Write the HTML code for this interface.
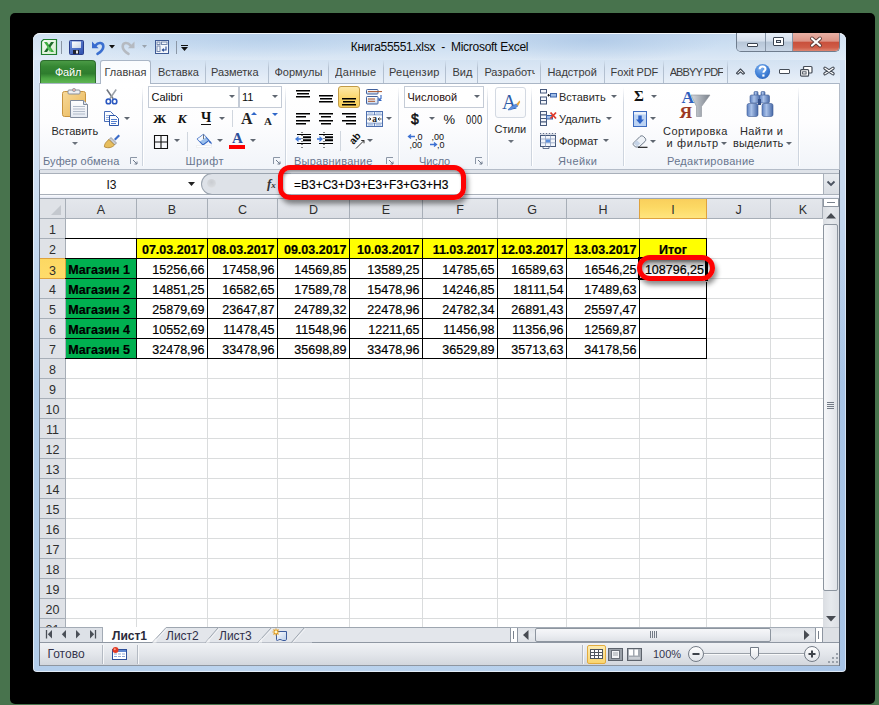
<!DOCTYPE html>
<html><head><meta charset="utf-8">
<style>
*{margin:0;padding:0;box-sizing:border-box}
html,body{width:879px;height:705px;overflow:hidden;background:#48734d;font-family:"Liberation Sans",sans-serif;font-size:11px;color:#222}
.a{position:absolute}
svg{position:absolute;overflow:visible}
.nw{white-space:nowrap}

#shadow{left:10px;top:13px;width:865px;height:691px;background:#000;border-radius:5px}
#win{left:33px;top:33px;width:813px;height:639px;border-radius:7px 7px 4px 4px;
 background:linear-gradient(180deg,rgba(230,238,248,.75) 0%,rgba(230,238,248,.5) 25%,rgba(230,238,248,0) 55%),linear-gradient(90deg,#b2cdeb 0%,#bcd4ee 25%,#b8d1ec 50%,#b6cfeb 75%,#a7c4e7 100%);box-shadow:inset 1px 0 0 rgba(255,255,255,.6),inset -1px 0 0 rgba(255,255,255,.5),inset 0 -1px 0 rgba(255,255,255,.6)}
#wintop{left:33px;top:33px;width:813px;height:27px;border-radius:7px 7px 0 0;
 background:radial-gradient(ellipse 130px 22px at 560px 6px,rgba(160,190,225,.55),rgba(160,190,225,0)),
 radial-gradient(ellipse 160px 20px at 230px 4px,rgba(165,195,228,.45),rgba(165,195,228,0)),
 linear-gradient(90deg,rgba(235,242,250,.35) 0%,rgba(235,242,250,0) 15%,rgba(235,242,250,0) 85%,rgba(235,242,250,.4) 100%),
 linear-gradient(180deg,#c4d8ee 0%,#cddfF2 45%,#dce8f5 100%);border-top:1px solid #f4f8fc}


.ttl{left:0;top:39.5px;width:879px;text-align:center;font-size:12px;color:#0a0a0a;letter-spacing:-0.28px}
.wb{top:33px;height:19px;border:1px solid #7a8796;border-top:none}


#tabrow{left:39px;top:60px;width:801px;height:23px;background:linear-gradient(180deg,#d3e2f2 0%,#dde8f5 50%,#e9f0f8 100%)}
.tab{top:66px;font-size:11px;color:#3b3b3b}
.ts{top:60px;width:1px;height:23px;background:linear-gradient(180deg,rgba(160,178,200,0) 0%,#b3c0d0 35%,#b3c0d0 100%)}


#rib{left:39px;top:83px;width:801px;height:87px;border:1px solid #b4bcc8;border-top-color:#aab6c6;
 background:linear-gradient(180deg,#ffffff 0%,#fdfdfe 45%,#f1f4f9 100%)}
.gs{top:87px;width:1px;height:79px;background:linear-gradient(180deg,rgba(205,212,222,0) 0%,#d3d9e2 20%,#cdd4de 100%);box-shadow:1px 0 0 #fff}
.gl{top:155px;font-size:11px;color:#68758e;letter-spacing:.14px}
.rt{font-size:11px;color:#2a2a2a}
.dd{width:0;height:0;border-left:3px solid transparent;border-right:3px solid transparent;border-top:3px solid #5f6670;margin-left:-.5px}
.cb{background:#fff;border:1px solid #c4cbd6}



#fb{left:39px;top:170px;width:801px;height:29px;background:#dfe3e9}


#gridbg{left:40px;top:199px;width:783px;height:428px;background:#fff;overflow:hidden}
.ch{top:199px;height:20px;background:linear-gradient(180deg,#e4e7ec,#dcdfe5);border-right:1px solid #a7aeb7;border-bottom:1px solid #a7aeb7}
.cht{top:202.5px;font-size:12.5px;color:#2e2e2e;text-align:center}
.rh{left:40px;width:26px;background:#dfe2e7;border-right:1px solid #a7aeb7;border-bottom:1px solid #a7aeb7;text-align:center;font-size:12.5px;color:#2e2e2e;line-height:20px;padding-top:1px}
.gv{top:219px;width:1px;height:408px;background:#dadcdd}
.gh{left:66px;width:757px;height:1px;background:#dadcdd}
.c{font-size:12.5px;color:#000;white-space:nowrap;line-height:19px;height:19px;padding-top:1px;-webkit-text-stroke:.2px #000}
.cb2{font-weight:bold}


.sb{background:linear-gradient(180deg,#f0f2f5 0%,#e3e6eb 50%,#d3d7dd 100%)}
.ttab{top:629px;font-size:12px;color:#30304a}


.rb{border:5px solid #fe0202;box-shadow:2px 4px 5px rgba(0,0,0,.45),inset 1px 2px 3px rgba(0,0,0,.35)}

</style></head><body>

<div id="shadow" class="a"></div>
<div id="win" class="a"></div>
<div id="wintop" class="a"></div>


<svg style="left:40px;top:38px" width="18" height="18" viewBox="0 0 18 18">
 <defs><linearGradient id="xg" x1="0" y1="0" x2="1" y2="1"><stop offset="0" stop-color="#f4fbf2"/><stop offset="1" stop-color="#d5ecd0"/></linearGradient></defs>
 <path d="M3.5 1.5 H16.5 V16.5 H1.5 V3.5 Z" fill="url(#xg)" stroke="#1f7f2e" stroke-width="1.2"/>
 <path d="M4 4 L7 4 L14 14 L11 14 Z" fill="#3fae3f"/>
 <path d="M11 4 L14 4 L7 14 L4 14 Z" fill="#1d6b2a"/>
 <path d="M8.2 7.5 L11.5 12 L10 14 L6.8 9.6 Z" fill="#56c45a"/>
</svg>
<div class="a" style="left:61px;top:41px;width:1px;height:13px;background:#8b97a6"></div>
<svg style="left:69px;top:40px" width="15" height="15" viewBox="0 0 15 15">
 <defs><linearGradient id="sg" x1="0" y1="0" x2="1" y2="1"><stop offset="0" stop-color="#7392dc"/><stop offset="1" stop-color="#2d4fae"/></linearGradient>
 <linearGradient id="sl" x1="0" y1="0" x2="1" y2="1"><stop offset="0" stop-color="#ffffff"/><stop offset="1" stop-color="#c9d3e6"/></linearGradient></defs>
 <rect x="0.5" y="0.5" width="14" height="14" rx="1" fill="url(#sg)" stroke="#2a3f8c" stroke-width="1"/>
 <rect x="3" y="1.5" width="9" height="6.5" fill="url(#sl)"/>
 <rect x="4" y="10" width="6" height="4" fill="#1e2130"/>
 <rect x="7" y="10.5" width="2" height="3" fill="#e8e8e8"/>
</svg>
<svg style="left:91px;top:40px" width="15" height="15" viewBox="0 0 15 15">
 <path d="M4.5 5.5 C7 2 12.5 1.8 12.3 6.8 C12.1 10 9.5 12 6.5 13.8" fill="none" stroke="#3b6fd0" stroke-width="2.6" stroke-linecap="round"/>
 <path d="M1 1.5 L1 8.2 L7.6 8.2 Z" fill="#3a6bcf"/>
</svg>
<svg style="left:109px;top:45px" width="7" height="4"><path d="M0 0 H6 L3 3.5 Z" fill="#111"/></svg>
<svg style="left:120px;top:40px" width="16" height="15" viewBox="0 0 16 15">
 <path d="M10.5 5.5 C8 2 2.5 1.8 2.7 6.8 C2.9 10 5.5 12 8.5 13.8" fill="none" stroke="#b5bac1" stroke-width="2.6" stroke-linecap="round"/>
 <path d="M14.5 1.5 L14.5 8.2 L7.9 8.2 Z" fill="#b5bac1"/>
</svg>
<svg style="left:142px;top:45px" width="7" height="4"><path d="M0 0 H5 L2.5 3 Z" fill="#9aa3ad"/></svg>
<svg style="left:155px;top:40px" width="14" height="14" viewBox="0 0 14 14">
 <rect x="0.5" y="0.5" width="13" height="13" fill="#f4f7fc" stroke="#3e5a94"/>
 <rect x="2" y="2" width="3" height="2.5" fill="none" stroke="#6b7fa8" stroke-width=".9"/>
 <rect x="6.5" y="2" width="5.5" height="2.5" fill="none" stroke="#6b7fa8" stroke-width=".9"/>
 <rect x="2" y="6" width="3" height="5.5" fill="none" stroke="#6b7fa8" stroke-width=".9"/>
 <path d="M11 6.5 V10 H7.5 M8.8 8.6 L7.3 10 L8.8 11.4" fill="none" stroke="#2a4c95" stroke-width="1.1"/>
</svg>
<div class="a" style="left:176px;top:41px;width:1px;height:13px;background:#8b97a6"></div>
<div class="a" style="left:181px;top:45px;width:7px;height:1px;background:#111"></div>
<svg style="left:181px;top:47px" width="7" height="4"><path d="M0 0 H7 L3.5 4 Z" fill="#111"/></svg>
<div class="a ttl nw">Книга55551.xlsx&nbsp; - &nbsp;Microsoft Excel</div>
<div class="a" style="left:736px;top:33px;width:104px;height:19px;border-radius:0 0 5px 5px;border:1px solid #6f7d8e;border-top:none;overflow:hidden">
 <div class="a" style="left:0;top:0;width:29px;height:18px;background:linear-gradient(180deg,#e7eef7 0%,#d5dfec 45%,#b7c6d8 50%,#c9d6e6 100%);border-right:1px solid #8896a8"></div>
 <div class="a" style="left:29px;top:0;width:27px;height:18px;background:linear-gradient(180deg,#e7eef7 0%,#d5dfec 45%,#b7c6d8 50%,#c9d6e6 100%);border-right:1px solid #8896a8"></div>
 <div class="a" style="left:56px;top:0;width:47px;height:18px;background:linear-gradient(180deg,#e9b1a5 0%,#dc9486 45%,#c9503c 52%,#cf5c47 80%,#dc8571 100%)"></div>
</div>
<div class="a" style="left:747px;top:43px;width:11px;height:4px;background:#fff;border:1px solid #3b4452;border-radius:1px"></div>
<div class="a" style="left:773px;top:37px;width:11px;height:9px;background:#fff;border:1px solid #3b4452;border-radius:1px"><div class="a" style="left:2px;top:2px;width:5px;height:3px;border:1px solid #3b4452;background:#dfe6ee"></div></div>
<svg style="left:810px;top:37px" width="12" height="10" viewBox="0 0 12 10"><path d="M2 1.5 L10 8.5 M10 1.5 L2 8.5" stroke="#5a3a36" stroke-width="3.8" stroke-linecap="round"/><path d="M2 1.5 L10 8.5 M10 1.5 L2 8.5" stroke="#fff" stroke-width="2.2" stroke-linecap="round"/></svg>

<div id="tabrow" class="a"></div>
<div class="a ts" style="left:205px"></div><div class="a ts" style="left:268px"></div><div class="a ts" style="left:328px"></div><div class="a ts" style="left:383px"></div><div class="a ts" style="left:445px"></div><div class="a ts" style="left:477px"></div><div class="a ts" style="left:540px"></div><div class="a ts" style="left:604px"></div><div class="a ts" style="left:663px"></div><div class="a ts" style="left:727px"></div><div class="a tab nw" style="left:158px;width:48px;overflow:hidden;">Вставка</div><div class="a tab nw" style="left:211px;width:58px;overflow:hidden;">Разметка</div><div class="a tab nw" style="left:274.5px;width:54.5px;overflow:hidden;">Формулы</div><div class="a tab nw" style="left:335px;width:49px;overflow:hidden;letter-spacing:.28px;">Данные</div><div class="a tab nw" style="left:389px;width:57px;overflow:hidden;letter-spacing:.25px;">Рецензир</div><div class="a tab nw" style="left:452.5px;width:25.5px;overflow:hidden;">Вид</div><div class="a tab nw" style="left:484.4px;width:50.5px;overflow:hidden;">Разработч</div><div class="a tab nw" style="left:547.4px;width:57.60000000000002px;overflow:hidden;">Надстрой</div><div class="a tab nw" style="left:610.6px;width:53.39999999999998px;overflow:hidden;letter-spacing:-.15px;">Foxit PDF</div><div class="a tab nw" style="left:669.7px;width:53px;overflow:hidden;letter-spacing:-.9px;">ABBYY PDF</div>
<div class="a" style="left:40px;top:60px;width:56px;height:24px;border-radius:4px 4px 0 0;border:1px solid #2d6d2d;border-bottom:none;
 background:linear-gradient(180deg,#4a9a45 0%,#358733 25%,#2e7d2e 55%,#4ba543 75%,#63b957 100%)"></div>
<div class="a nw" style="left:55px;top:66px;font-size:11px;color:#fff;letter-spacing:-.25px">Файл</div>
<div class="a" style="left:100px;top:60px;width:51px;height:24px;border-radius:3px 3px 0 0;border:1px solid #aab6c6;border-bottom:none;background:linear-gradient(180deg,#fafcfe,#ffffff)"></div>
<div class="a tab nw" style="left:104.5px">Главная</div>

<svg style="left:735px;top:67px" width="11" height="8" viewBox="0 0 11 8"><path d="M1.5 6.2 L5.5 2 L9.5 6.2 L8 7.2 L5.5 4.8 L3 7.2 Z" fill="#fff" stroke="#3d4450" stroke-width="1.1" stroke-linejoin="round"/></svg>
<svg style="left:754px;top:63px" width="17" height="17" viewBox="0 0 17 17">
 <defs><radialGradient id="hq" cx=".4" cy=".3" r=".8"><stop offset="0" stop-color="#7db0ee"/><stop offset=".6" stop-color="#3f7fd6"/><stop offset="1" stop-color="#2d62b8"/></radialGradient></defs>
 <circle cx="8.5" cy="8.5" r="7.6" fill="url(#hq)"/>
 <path d="M5.6 6.3 C5.6 4.4 7 3.4 8.6 3.4 C10.3 3.4 11.5 4.5 11.5 5.9 C11.5 7.6 9.4 8 9.4 9.8" fill="none" stroke="#fff" stroke-width="2"/>
 <rect x="8.3" y="11.4" width="2.2" height="2.2" fill="#fff"/>
</svg>
<div class="a" style="left:779px;top:69px;width:11px;height:5px;border:1px solid #454c57;background:#fff;border-radius:1px"></div>
<svg style="left:800px;top:66px" width="13" height="11" viewBox="0 0 13 11"><rect x="3.5" y="0.5" width="8.5" height="6.5" rx="1" fill="#fff" stroke="#454c57" stroke-width="1.2"/><rect x="0.6" y="3.6" width="8" height="6.6" rx="1" fill="#fff" stroke="#454c57" stroke-width="1.2"/><rect x="2.6" y="5.8" width="3.5" height="2.2" fill="none" stroke="#454c57" stroke-width=".9"/></svg>
<svg style="left:823px;top:67px" width="12" height="8" viewBox="0 0 12 8"><path d="M2 1.3 L10 6.7 M10 1.3 L2 6.7" stroke="#454c57" stroke-width="3.4" stroke-linecap="round"/><path d="M2 1.3 L10 6.7 M10 1.3 L2 6.7" stroke="#fff" stroke-width="1.3" stroke-linecap="round"/></svg>

<div id="rib" class="a"></div><div class="a" style="left:101px;top:83px;width:49px;height:2px;background:#fff"></div><div class="a gs" style="left:142px"></div><div class="a gs" style="left:285px"></div><div class="a gs" style="left:398px"></div><div class="a gs" style="left:487px"></div><div class="a gs" style="left:531px"></div><div class="a gs" style="left:623px"></div><div class="a gs" style="left:798px"></div><div class="a gl nw" style="left:43px">Буфер обмена</div><svg style="left:130px;top:157px" width="8" height="8" viewBox="0 0 8 8"><path d="M0.5 7 V0.5 H7" fill="none" stroke="#8b96a6" stroke-width="1"/><path d="M3 3 L7 7 M7 4.5 V7 H4.5" fill="none" stroke="#6e7a8c" stroke-width="1"/></svg><div class="a gl nw" style="left:185.5px;letter-spacing:.45px">Шрифт</div><svg style="left:273px;top:157px" width="8" height="8" viewBox="0 0 8 8"><path d="M0.5 7 V0.5 H7" fill="none" stroke="#8b96a6" stroke-width="1"/><path d="M3 3 L7 7 M7 4.5 V7 H4.5" fill="none" stroke="#6e7a8c" stroke-width="1"/></svg><div class="a gl nw" style="left:294px;letter-spacing:.24px">Выравнивание</div><svg style="left:386px;top:157px" width="8" height="8" viewBox="0 0 8 8"><path d="M0.5 7 V0.5 H7" fill="none" stroke="#8b96a6" stroke-width="1"/><path d="M3 3 L7 7 M7 4.5 V7 H4.5" fill="none" stroke="#6e7a8c" stroke-width="1"/></svg>
<svg style="left:61px;top:88px" width="28" height="31" viewBox="0 0 28 31">
 <defs><linearGradient id="cbg" x1="0" y1="0" x2="1" y2="1"><stop offset="0" stop-color="#f7d99a"/><stop offset="1" stop-color="#e9b655"/></linearGradient>
 <linearGradient id="ppg" x1="0" y1="0" x2="0" y2="1"><stop offset="0" stop-color="#ffffff"/><stop offset="1" stop-color="#e4e9f2"/></linearGradient></defs>
 <rect x="1.5" y="3.5" width="23" height="25" rx="2" fill="url(#cbg)" stroke="#c79440"/>
 <rect x="7" y="2" width="12" height="4" rx="1" fill="#eef0f4" stroke="#8a8f98"/>
 <circle cx="13" cy="2" r="1.6" fill="#fff" stroke="#8a8f98" stroke-width=".8"/><circle cx="13" cy="2" r=".7" fill="#c0392b"/>
 <path d="M9.5 12.5 H22.5 L26.5 16.5 V29.5 H9.5 Z" fill="url(#ppg)" stroke="#7f8a9c"/>
 <path d="M22.5 12.5 V16.5 H26.5" fill="#dde3ec" stroke="#7f8a9c"/>
 <path d="M12 18.5 H24 M12 21 H24 M12 23.5 H24 M12 26 H24" stroke="#aab4c4" stroke-width=".9"/>
</svg>
<div class="a rt nw" style="left:51.5px;top:125px">Вставить</div>
<div class="a dd" style="left:72px;top:142px;border-top-color:#6b727c"></div>
<svg style="left:105px;top:89px" width="13" height="16" viewBox="0 0 13 16">
 <path d="M1.8 0.5 L8.2 9.8" stroke="#6f757e" stroke-width="1.5"/>
 <path d="M11.2 0.5 L4.8 9.8" stroke="#9aa0a8" stroke-width="1.5"/>
 <ellipse cx="3.4" cy="12.4" rx="2.2" ry="2.4" fill="none" stroke="#2b58c0" stroke-width="1.6"/>
 <ellipse cx="9.6" cy="12.4" rx="2.2" ry="2.4" fill="none" stroke="#2b58c0" stroke-width="1.6"/>
</svg>
<svg style="left:104px;top:111px" width="16" height="15" viewBox="0 0 16 15">
 <path d="M0.5 0.5 H6.5 L9.5 3.5 V10.5 H0.5 Z" fill="#fbfcfe" stroke="#4a6fb8"/>
 <path d="M2 4.5 H7 M2 6.5 H7 M2 8.5 H6" stroke="#7c9bd6" stroke-width=".8"/>
 <path d="M5.5 4.5 H11.5 L14.5 7.5 V14.5 H5.5 Z" fill="#fbfcfe" stroke="#2c55a8"/>
 <path d="M7 8.5 H13 M7 10.5 H13 M7 12.5 H12" stroke="#3f6fc8" stroke-width=".9"/>
</svg>
<div class="a dd" style="left:124px;top:117px;border-top-color:#5f6670"></div>
<svg style="left:103px;top:133px" width="18" height="16" viewBox="0 0 18 16">
 <path d="M11 6 L15.5 1.5 L17 3 L12.5 7.5 Z" fill="#3a6bc8"/>
 <path d="M8 4.5 L13.5 10 L11.5 12 L6 6.5 Z" fill="#c9ccd2" stroke="#7a7f88" stroke-width=".7"/>
 <path d="M6 6.5 L11.5 12 C9 14.5 6 15.5 1.5 14 C1 12 2.5 9 6 6.5 Z" fill="#e7be5e" stroke="#a97c2a" stroke-width=".8"/>
</svg>

<div class="a cb" style="left:148px;top:86px;width:91px;height:22px"></div>
<div class="a cb" style="left:239px;top:86px;width:43px;height:22px"></div>
<div class="a rt nw" style="left:151.5px;top:91px;color:#0c0c0c">Calibri</div>
<div class="a rt nw" style="left:242px;top:91px;color:#0c0c0c">11</div>
<div class="a dd" style="left:229px;top:95px;border-top-color:#5f6670"></div><div class="a dd" style="left:272px;top:95px;border-top-color:#5f6670"></div>
<div class="a nw" style="left:153px;top:111px;font:bold 13.5px 'Liberation Serif',serif;color:#111">Ж</div>
<div class="a nw" style="left:177.5px;top:111px;font:italic bold 13.5px 'Liberation Serif',serif;color:#111">К</div>
<div class="a nw" style="left:201px;top:110px;font:bold 14px 'Liberation Serif',serif;color:#111">Ч</div>
<div class="a" style="left:201px;top:124px;width:10px;height:1px;background:#111"></div>
<div class="a dd" style="left:219px;top:117px;border-top-color:#5f6670"></div>
<div class="a" style="left:232px;top:110px;width:1px;height:17px;background:#d0d6de"></div>
<div class="a nw" style="left:241px;top:110px;font:bold 16px 'Liberation Serif',serif;color:#222">A</div>
<svg style="left:251px;top:112px" width="6" height="3"><path d="M0 3 L3 0 L6 3 Z" fill="#2f66c9"/></svg>
<div class="a nw" style="left:264px;top:115px;font:bold 11px 'Liberation Serif',serif;color:#222">A</div>
<svg style="left:272px;top:113px" width="6" height="3"><path d="M0 0 L6 0 L3 3 Z" fill="#2f66c9"/></svg>
<svg style="left:154px;top:135px" width="14" height="14" viewBox="0 0 14 14"><path d="M0.5 0.5 H13.5 V13.5 H0.5 Z M7 0.5 V13.5 M0.5 7 H13.5" fill="none" stroke="#111" stroke-width="1.1"/></svg>
<div class="a dd" style="left:174px;top:139px;border-top-color:#5f6670"></div>
<div class="a" style="left:187px;top:132px;width:1px;height:19px;background:#d0d6de"></div>
<svg style="left:196px;top:133px" width="18" height="15" viewBox="0 0 18 15">
 <path d="M1.5 6 L7.5 1.5 L13 7.5 L7 12 Z" fill="#9cc0ec" stroke="#3466c2" stroke-width="1.1"/>
 <path d="M1.5 6 L7.5 1.5 L10 4.2 L4 8.5 Z" fill="#f5f8fd"/>
 <path d="M7.5 1.5 V6" stroke="#6a7380" stroke-width="1"/>
 <path d="M13 7.5 C15.5 8.5 16 10 15.5 11.5 C14.8 10.5 14 9.8 13 9.6 Z" fill="#3466c2"/>
</svg>
<div class="a" style="left:196px;top:145px;width:16px;height:3px;background:#fff;border:1px solid #eef0f3"></div>
<div class="a dd" style="left:217px;top:139px;border-top-color:#5f6670"></div>
<div class="a nw" style="left:232px;top:130px;font:bold 15px 'Liberation Serif',serif;color:#2c4f9a">A</div>
<div class="a" style="left:229px;top:145px;width:16px;height:4px;background:#fe0000"></div>
<div class="a dd" style="left:250px;top:139px;border-top-color:#5f6670"></div><svg style="left:296px;top:90px" width="14" height="9"><rect x="0.0" y="0" width="14" height="1.5" fill="#000"/><rect x="1.0" y="3" width="12" height="1.5" fill="#000"/><rect x="0.0" y="6" width="14" height="1.5" fill="#000"/></svg><svg style="left:319px;top:94.5px" width="14" height="9"><rect x="0.0" y="0" width="14" height="1.5" fill="#000"/><rect x="1.0" y="3" width="12" height="1.5" fill="#000"/><rect x="0.0" y="6" width="14" height="1.5" fill="#000"/></svg><div class="a" style="left:338px;top:86px;width:22px;height:22px;border:1px solid #c29b46;border-radius:3px;background:linear-gradient(180deg,#fde9a9 0%,#fbd872 50%,#f8cf5a 100%)"></div><svg style="left:342px;top:97.5px" width="14" height="9"><rect x="0.0" y="0" width="14" height="1.5" fill="#000"/><rect x="1.0" y="3" width="12" height="1.5" fill="#000"/><rect x="0.0" y="6" width="14" height="1.5" fill="#000"/></svg>
<svg style="left:366px;top:89px" width="17" height="16" viewBox="0 0 17 16">
 <defs><linearGradient id="wbx" x1="0" y1="0" x2="0" y2="1"><stop offset="0" stop-color="#ffffff"/><stop offset="1" stop-color="#c9d8ee"/></linearGradient></defs>
 <rect x="0.5" y="0.5" width="11.5" height="4.5" rx=".8" fill="url(#wbx)" stroke="#3f5f9c"/>
 <path d="M2 2.6 H16" stroke="#a8532a" stroke-width="1"/>
 <rect x="0.5" y="7.5" width="11.5" height="7.5" rx=".8" fill="url(#wbx)" stroke="#3f5f9c"/>
 <path d="M2 10 H9 M2 12.3 H9" stroke="#a8532a" stroke-width="1"/>
 <path d="M15 6 V9.5 L13 11.5 M13 9 V11.5 H15.5" fill="none" stroke="#3466c2" stroke-width="1.1"/>
</svg>
<svg style="left:296px;top:113px" width="14" height="13"><rect x="0" y="0" width="14" height="1.5" fill="#000"/><rect x="0" y="3" width="10" height="1.5" fill="#000"/><rect x="0" y="7" width="14" height="1.5" fill="#000"/><rect x="0" y="10" width="10" height="1.5" fill="#000"/></svg><svg style="left:319px;top:113px" width="14" height="13"><rect x="0.0" y="0" width="14" height="1.5" fill="#000"/><rect x="2.0" y="3" width="10" height="1.5" fill="#000"/><rect x="0.0" y="7" width="14" height="1.5" fill="#000"/><rect x="2.0" y="10" width="10" height="1.5" fill="#000"/></svg><svg style="left:342px;top:113px" width="14" height="13"><rect x="0" y="0" width="14" height="1.5" fill="#000"/><rect x="4" y="3" width="10" height="1.5" fill="#000"/><rect x="0" y="7" width="14" height="1.5" fill="#000"/><rect x="4" y="10" width="10" height="1.5" fill="#000"/></svg>
<svg style="left:366px;top:111px" width="17" height="16" viewBox="0 0 17 16">
 <rect x="0.5" y="0.5" width="16" height="15" fill="#e6eef9" stroke="#4d6fae"/>
 <path d="M1 4 H16 M1 12 H16 M8.5 1 V4 M8.5 12 V15" stroke="#4d6fae" stroke-width=".8"/>
 <path d="M2 2 H7 M10 2 H15 M2 13.8 H7 M10 13.8 H15" stroke="#9db6de" stroke-width="1.2"/>
 <rect x="1" y="4.5" width="15" height="7" fill="#fafbfd"/>
 <text x="8.5" y="11" font-family="Liberation Serif" font-weight="bold" font-size="9.5" text-anchor="middle" fill="#222">a</text>
 <path d="M1.5 8 H5 M3.5 6.5 L5 8 L3.5 9.5 M15.5 8 H12 M13.5 6.5 L12 8 L13.5 9.5" fill="none" stroke="#333" stroke-width=".9"/>
</svg>
<div class="a dd" style="left:386px;top:117px;border-top-color:#5f6670"></div>
<svg style="left:294px;top:132px" width="18" height="17" viewBox="0 0 18 17">
 <path d="M3 2.5 H17 M9 5.5 H17 M9 8.5 H17 M3 11.5 H17" stroke="#000" stroke-width="1.2"/>
 <path d="M9 5.2 H17 M9 8.2 H17" stroke="#000" stroke-width="2"/>
 <path d="M8 0 V17" stroke="#111" stroke-width="1" stroke-dasharray="1 2"/>
 <path d="M1 7 L4.5 4 V10 Z" fill="#3f78d8"/><path d="M4 7 H7" stroke="#3f78d8" stroke-width="1.6"/>
</svg>
<svg style="left:316px;top:132px" width="18" height="17" viewBox="0 0 18 17">
 <path d="M3 2.5 H17 M9 5.5 H17 M9 8.5 H17 M3 11.5 H17" stroke="#000" stroke-width="1.2"/>
 <path d="M9 5.2 H17 M9 8.2 H17" stroke="#000" stroke-width="2"/>
 <path d="M8 0 V17" stroke="#111" stroke-width="1" stroke-dasharray="1 2"/>
 <path d="M7 7 L3.5 4 V10 Z" fill="#3f78d8"/><path d="M1 7 H4" stroke="#3f78d8" stroke-width="1.6"/>
</svg>
<div class="a" style="left:340px;top:131px;width:1px;height:20px;background:#d0d6de"></div>
<svg style="left:349px;top:133px" width="17" height="16" viewBox="0 0 17 16">
 <text x="0" y="0" font-family="Liberation Sans" font-weight="bold" font-size="10" fill="#111" transform="translate(4.5,12) rotate(-48)">ab</text>
 <path d="M7 15.5 L15 7.5 M12.2 7.5 H15 V10.3" fill="none" stroke="#333" stroke-width="1"/>
</svg>
<div class="a dd" style="left:367px;top:139px;border-top-color:#5f6670"></div>
<div class="a gl nw" style="left:419px;letter-spacing:-.1px">Число</div><svg style="left:475px;top:157px" width="8" height="8" viewBox="0 0 8 8"><path d="M0.5 7 V0.5 H7" fill="none" stroke="#8b96a6" stroke-width="1"/><path d="M3 3 L7 7 M7 4.5 V7 H4.5" fill="none" stroke="#6e7a8c" stroke-width="1"/></svg><div class="a gl nw" style="left:558px;letter-spacing:.42px">Ячейки</div><div class="a gl nw" style="left:667px;letter-spacing:.28px">Редактирование</div>
<div class="a cb" style="left:404px;top:86px;width:80px;height:22px"></div>
<div class="a rt nw" style="left:407.5px;top:91px;color:#2a1010">Числовой</div>
<div class="a dd" style="left:474px;top:95px;border-top-color:#5f6670"></div>
<div class="a nw" style="left:411px;top:110.5px;font:14px 'Liberation Sans',sans-serif;color:#111;-webkit-text-stroke:.5px #111">$</div>
<div class="a dd" style="left:429px;top:117px;border-top-color:#5f6670"></div>
<div class="a nw" style="left:443.5px;top:111.5px;font:13px 'Liberation Sans',sans-serif;color:#111">%</div>
<div class="a nw" style="left:465.5px;top:112.5px;font:12px 'Liberation Sans',sans-serif;color:#111;transform:scaleX(.78);transform-origin:0 0;letter-spacing:.3px">000</div>
<svg style="left:407px;top:133px" width="40" height="16" viewBox="0 0 40 16">
 <g font-family="Liberation Sans" font-size="9" fill="#111">
  <text x="8" y="7">,0</text><text x="2.5" y="15">,00</text>
  <text x="24.5" y="7">,00</text><text x="30" y="15">,0</text>
 </g>
 <path d="M1.5 3.5 H8 M4 1.5 L1.5 3.5 L4 5.5" fill="none" stroke="#3c70d2" stroke-width="1.3"/>
 <path d="M23 11.5 H29.5 M27 9.5 L29.5 11.5 L27 13.5" fill="none" stroke="#3c70d2" stroke-width="1.3"/>
</svg>

<div class="a" style="left:495px;top:87px;width:31px;height:31px;border:1px solid #d3d9e2;border-radius:3px;background:linear-gradient(180deg,#fff,#f8f9fb)"></div>
<div class="a nw" style="left:502px;top:91px;font:20px 'Liberation Serif',serif;color:#2d5ba6">A</div>
<svg style="left:507px;top:99px" width="14" height="12" viewBox="0 0 14 12"><path d="M1 11 C3 8 6 6 9.5 5 L11 7 C8.5 9 5 11 1 11 Z" fill="#5b8ee0" stroke="#2d5ba6" stroke-width=".5"/><path d="M9.5 5 L12.5 1.5 L13.2 3 L11 7 Z" fill="#e7a63c"/></svg>
<div class="a rt nw" style="left:494.5px;top:123px">Стили</div>
<div class="a dd" style="left:508px;top:140px;border-top-color:#6b727c"></div>
<svg style="left:540px;top:89px" width="17" height="16" viewBox="0 0 17 16">
 <rect x="0.5" y="0.5" width="6" height="3.5" fill="#f3f6fb" stroke="#46587a"/>
 <rect x="0.5" y="8" width="6" height="3.5" fill="#f3f6fb" stroke="#46587a"/>
 <rect x="0.5" y="11.5" width="6" height="3.5" fill="#f3f6fb" stroke="#46587a"/>
 <rect x="10.5" y="4.5" width="6" height="3.5" fill="#9fbde8" stroke="#3b62a8"/>
 <path d="M7.5 6.3 H10 M8.5 5 V7.5" stroke="#111" stroke-width="1"/>
</svg>
<div class="a rt nw" style="left:559px;top:91px">Вставить</div><div class="a dd" style="left:611px;top:95px;border-top-color:#5f6670"></div>
<svg style="left:540px;top:111px" width="17" height="15" viewBox="0 0 17 15">
 <rect x="0.5" y="0.5" width="6" height="3.5" fill="#f3f6fb" stroke="#46587a"/>
 <rect x="0.5" y="4" width="6" height="3.5" fill="#f3f6fb" stroke="#46587a"/>
 <rect x="0.5" y="7.5" width="6" height="3.5" fill="#f3f6fb" stroke="#46587a"/>
 <rect x="0.5" y="11" width="6" height="3.5" fill="#f3f6fb" stroke="#46587a"/>
 <rect x="6.5" y="4.5" width="6" height="3.5" fill="#9fbde8" stroke="#3b62a8"/>
 <path d="M10.5 1.5 L16 7.5 M16 1.5 L10.5 7.5" stroke="#e23a2a" stroke-width="1.8"/>
</svg>
<div class="a rt nw" style="left:559px;top:113px">Удалить</div><div class="a dd" style="left:606px;top:117px;border-top-color:#5f6670"></div>
<svg style="left:540px;top:132px" width="17" height="17" viewBox="0 0 17 17">
 <path d="M0.5 1 V3 M3.5 1 V3 M6.5 1 V3 M9.5 1 V3 M12.5 1 V3 M15.5 1 V3 M0.5 2 H15.5" stroke="#46587a" stroke-width=".8" stroke-dasharray="1 1"/>
 <rect x="0.5" y="3.5" width="15" height="11" fill="#f3f6fb" stroke="#46587a"/>
 <path d="M5.5 3.5 V14.5 M10.5 3.5 V14.5 M0.5 7 H15.5 M0.5 10.8 H15.5" stroke="#8ea0c0" stroke-width=".8"/>
 <rect x="6" y="7.5" width="4" height="3" fill="#5c8fdc"/>
 <path d="M3 14.5 V16.5 H9 V14.5" fill="none" stroke="#46587a" stroke-width=".8"/>
</svg>
<div class="a rt nw" style="left:559px;top:135px">Формат</div><div class="a dd" style="left:603px;top:139px;border-top-color:#5f6670"></div>
<div class="a nw" style="left:634px;top:87.5px;font:bold 15px 'Liberation Serif',serif;color:#111">Σ</div>
<div class="a dd" style="left:651px;top:95px;border-top-color:#5f6670"></div>
<svg style="left:633px;top:111px" width="14" height="16" viewBox="0 0 14 16">
 <rect x="0.5" y="0.5" width="13" height="15" fill="#bcd3f3" stroke="#3d6bc0"/>
 <rect x="1" y="1" width="12" height="2.5" fill="#eaf1fb"/>
 <path d="M5.3 4.5 H8.7 V8.5 H11 L7 13 L3 8.5 H5.3 Z" fill="#2f63c6"/>
</svg>
<div class="a dd" style="left:650px;top:117px;border-top-color:#5f6670"></div>
<svg style="left:632px;top:135px" width="17" height="13" viewBox="0 0 17 13">
 <path d="M1.5 8 L8 1.5 C9 0.6 10.5 0.6 11.5 1.5 L13 3 C14 4 14 5.5 13 6.5 L7 12 H3.5 L1.5 10 C1 9.4 1 8.6 1.5 8 Z" fill="#eef2f7" stroke="#5f6b7c" stroke-width=".9"/>
 <path d="M5 11.5 L1.7 8.3 L4.8 5.2 L8.3 8.5" fill="#c5d3e6"/>
 <path d="M6 12.3 H15.5" stroke="#111" stroke-width="1.1"/>
</svg>
<div class="a dd" style="left:650px;top:140px;border-top-color:#5f6670"></div>
<svg style="left:679px;top:89px" width="33" height="31" viewBox="0 0 33 31">
 <defs><linearGradient id="fun" x1="0" y1="0" x2="1" y2="0"><stop offset="0" stop-color="#d6d9de"/><stop offset=".5" stop-color="#a7adb5"/><stop offset="1" stop-color="#7b828c"/></linearGradient></defs>
 <path d="M12 6 H31 L22.5 17.5 V27.5 H17.5 V17.5 Z" fill="url(#fun)" stroke="#8b9098" stroke-width=".6"/>
 <text x="2.5" y="14.3" font-family="Liberation Serif" font-weight="bold" font-size="17.5" fill="#2f5fbd">A</text>
 <text x="0.5" y="29.3" font-family="Liberation Serif" font-weight="bold" font-size="17.5" fill="#9c3a25">Я</text>
</svg>
<svg style="left:746px;top:91px" width="29" height="26" viewBox="0 0 29 26">
 <defs><linearGradient id="bin" x1="0" y1="0" x2="1" y2="0"><stop offset="0" stop-color="#5b7fc0"/><stop offset=".4" stop-color="#a9c1e8"/><stop offset="1" stop-color="#4769a8"/></linearGradient></defs>
 <rect x="8" y="0.5" width="4" height="4" rx="1" fill="url(#bin)" stroke="#3d5a94" stroke-width=".6"/>
 <rect x="15" y="0.5" width="4" height="4" rx="1" fill="url(#bin)" stroke="#3d5a94" stroke-width=".6"/>
 <rect x="4" y="4" width="10" height="8" rx="1.5" fill="url(#bin)" stroke="#3d5a94" stroke-width=".6"/>
 <rect x="13.5" y="4" width="10" height="8" rx="1.5" fill="url(#bin)" stroke="#3d5a94" stroke-width=".6"/>
 <rect x="12" y="8" width="3" height="6" fill="#35518a"/>
 <rect x="1" y="12.5" width="11" height="13" rx="2" fill="url(#bin)" stroke="#3d5a94" stroke-width=".6"/>
 <rect x="16" y="12.5" width="11" height="13" rx="2" fill="url(#bin)" stroke="#3d5a94" stroke-width=".6"/>
</svg>
<div class="a rt nw" style="left:663px;top:125px;letter-spacing:.45px">Сортировка</div>
<div class="a rt nw" style="left:666.5px;top:137px;letter-spacing:.7px">и фильтр</div><div class="a dd" style="left:721px;top:142px;border-top-color:#5f6670"></div>
<div class="a rt nw" style="left:740px;top:125px;letter-spacing:.4px">Найти и</div>
<div class="a rt nw" style="left:733px;top:137px;letter-spacing:.15px">выделить</div><div class="a dd" style="left:786px;top:142px;border-top-color:#5f6670"></div>

<div id="fb" class="a"></div>
<div class="a" style="left:40px;top:173px;width:783px;height:1px;background:#a9b0ba"></div>
<div class="a" style="left:40px;top:174px;width:783px;height:20px;background:#fff"></div>
<div class="a" style="left:40px;top:194px;width:783px;height:1px;background:#a9b0ba"></div>
<div class="a" style="left:40px;top:195px;width:799px;height:3px;background:linear-gradient(180deg,#fbfcfe,#e4e8f4)"></div>
<div class="a" style="left:40px;top:198px;width:799px;height:1px;background:#9ea6b1"></div>
<div class="a nw" style="left:106.5px;top:177.5px;font-size:12px;color:#111">I3</div>
<svg style="left:188px;top:182px" width="8" height="5"><path d="M0 0 H7 L3.5 4 Z" fill="#222"/></svg>
<div class="a" style="left:201px;top:173px;width:90px;height:22px;border-radius:11px 0 0 11px;background:#dee2e8;border:1px solid #9aa3ae;border-right:none"></div>
<div class="a" style="left:207px;top:179px;width:9px;height:9px;border-radius:50%;background:radial-gradient(circle at 50% 35%,#c9ccd1,#d6d9dd 60%,#e8eaed)"></div>
<div class="a nw" style="left:267px;top:176px;font:italic bold 13px 'Liberation Serif',serif;color:#333">f<span style="font-size:9px">x</span></div>
<div class="a" style="left:282px;top:174px;width:541px;height:20px;background:#fff;border-left:1px solid #b8bec8"></div>
<div class="a nw" style="left:294px;top:176.5px;font-size:12px;color:#000;transform:scaleY(1.1);transform-origin:0 0;-webkit-text-stroke:.15px #000">=B3+C3+D3+E3+F3+G3+H3</div>
<div class="a" style="left:823px;top:173px;width:16px;height:22px;background:linear-gradient(180deg,#e9ecf0,#d9dde3);border:1px solid #a9b0ba;border-right:none"></div>
<svg style="left:826px;top:180px" width="10" height="7" viewBox="0 0 10 7"><path d="M1.5 1.5 L5 5 L8.5 1.5" fill="none" stroke="#4b5360" stroke-width="1.8"/></svg>

<div id="gridbg" class="a"></div><div class="a gv" style="left:136px"></div><div class="a gv" style="left:207px"></div><div class="a gv" style="left:277px"></div><div class="a gv" style="left:349px"></div><div class="a gv" style="left:422px"></div><div class="a gv" style="left:497px"></div><div class="a gv" style="left:566px"></div><div class="a gv" style="left:639px"></div><div class="a gv" style="left:706px"></div><div class="a gv" style="left:770px"></div><div class="a gh" style="top:238px"></div><div class="a gh" style="top:258px"></div><div class="a gh" style="top:278px"></div><div class="a gh" style="top:298px"></div><div class="a gh" style="top:318px"></div><div class="a gh" style="top:338px"></div><div class="a gh" style="top:358px"></div><div class="a gh" style="top:378px"></div><div class="a gh" style="top:398px"></div><div class="a gh" style="top:418px"></div><div class="a gh" style="top:438px"></div><div class="a gh" style="top:458px"></div><div class="a gh" style="top:478px"></div><div class="a gh" style="top:498px"></div><div class="a gh" style="top:518px"></div><div class="a gh" style="top:538px"></div><div class="a gh" style="top:558px"></div><div class="a gh" style="top:578px"></div><div class="a gh" style="top:598px"></div><div class="a gh" style="top:618px"></div><div class="a" style="left:40px;top:199px;width:26px;height:20px;background:#dfe2e7;border-right:1px solid #a7aeb7;border-bottom:1px solid #a7aeb7"></div><svg style="left:51px;top:205px" width="10" height="10"><path d="M10 0 V10 H0 Z" fill="#c4c8ce"/></svg><div class="a ch" style="left:66px;width:71px"></div><div class="a cht" style="left:66px;width:70px">A</div><div class="a ch" style="left:137px;width:71px"></div><div class="a cht" style="left:137px;width:70px">B</div><div class="a ch" style="left:208px;width:70px"></div><div class="a cht" style="left:208px;width:69px">C</div><div class="a ch" style="left:278px;width:72px"></div><div class="a cht" style="left:278px;width:71px">D</div><div class="a ch" style="left:350px;width:73px"></div><div class="a cht" style="left:350px;width:72px">E</div><div class="a ch" style="left:423px;width:75px"></div><div class="a cht" style="left:423px;width:74px">F</div><div class="a ch" style="left:498px;width:69px"></div><div class="a cht" style="left:498px;width:68px">G</div><div class="a ch" style="left:567px;width:73px"></div><div class="a cht" style="left:567px;width:72px">H</div><div class="a ch" style="left:639px;width:68px;background:linear-gradient(180deg,#f9cf5c 0%,#fcd964 45%,#ffe57e 100%);border-left:1px solid #dea23d;border-right-color:#dea23d;border-bottom-color:#dea23d"></div><div class="a cht" style="left:640px;width:66px">I</div><div class="a ch" style="left:707px;width:64px"></div><div class="a cht" style="left:707px;width:63px">J</div><div class="a ch" style="left:771px;width:52px"></div><div class="a cht" style="left:771px;width:64px">K</div><div class="a rh" style="top:219px;height:20px">1</div><div class="a rh" style="top:239px;height:20px">2</div><div class="a rh" style="top:258px;height:21px;padding-top:2px;background:linear-gradient(180deg,#fdd862,#ffdc6a);border-top:1px solid #dea23d;border-bottom-color:#dea23d;border-right-color:#dea23d">3</div><div class="a rh" style="top:279px;height:20px">4</div><div class="a rh" style="top:299px;height:20px">5</div><div class="a rh" style="top:319px;height:20px">6</div><div class="a rh" style="top:339px;height:20px">7</div><div class="a rh" style="top:359px;height:20px">8</div><div class="a rh" style="top:379px;height:20px">9</div><div class="a rh" style="top:399px;height:20px">10</div><div class="a rh" style="top:419px;height:20px">11</div><div class="a rh" style="top:439px;height:20px">12</div><div class="a rh" style="top:459px;height:20px">13</div><div class="a rh" style="top:479px;height:20px">14</div><div class="a rh" style="top:499px;height:20px">15</div><div class="a rh" style="top:519px;height:20px">16</div><div class="a rh" style="top:539px;height:20px">17</div><div class="a rh" style="top:559px;height:20px">18</div><div class="a rh" style="top:579px;height:20px">19</div><div class="a rh" style="top:599px;height:20px">20</div><div class="a rh" style="top:619px;height:20px">21</div><div class="a" style="left:137px;top:239px;width:569px;height:19px;background:#ffff00"></div><div class="a" style="left:66px;top:259px;width:70px;height:99px;background:#00b050"></div><div class="a" style="left:65px;top:238px;width:642px;height:1px;background:#000"></div><div class="a" style="left:65px;top:258px;width:642px;height:1px;background:#000"></div><div class="a" style="left:65px;top:278px;width:642px;height:1px;background:#000"></div><div class="a" style="left:65px;top:298px;width:642px;height:1px;background:#000"></div><div class="a" style="left:65px;top:318px;width:642px;height:1px;background:#000"></div><div class="a" style="left:65px;top:338px;width:642px;height:1px;background:#000"></div><div class="a" style="left:65px;top:358px;width:642px;height:1px;background:#000"></div><div class="a" style="left:136px;top:238px;width:1px;height:121px;background:#000"></div><div class="a" style="left:207px;top:238px;width:1px;height:121px;background:#000"></div><div class="a" style="left:277px;top:238px;width:1px;height:121px;background:#000"></div><div class="a" style="left:349px;top:238px;width:1px;height:121px;background:#000"></div><div class="a" style="left:422px;top:238px;width:1px;height:121px;background:#000"></div><div class="a" style="left:497px;top:238px;width:1px;height:121px;background:#000"></div><div class="a" style="left:566px;top:238px;width:1px;height:121px;background:#000"></div><div class="a" style="left:639px;top:238px;width:1px;height:121px;background:#000"></div><div class="a" style="left:706px;top:238px;width:1px;height:121px;background:#000"></div><div class="a c cb2" style="left:107px;top:240px;width:97.5px;text-align:right">07.03.2017</div><div class="a c cb2" style="left:177px;top:240px;width:97.5px;text-align:right">08.03.2017</div><div class="a c cb2" style="left:249px;top:240px;width:97.5px;text-align:right">09.03.2017</div><div class="a c cb2" style="left:322px;top:240px;width:97.5px;text-align:right">10.03.2017</div><div class="a c cb2" style="left:397px;top:240px;width:97.5px;text-align:right">11.03.2017</div><div class="a c cb2" style="left:466px;top:240px;width:97.5px;text-align:right">12.03.2017</div><div class="a c cb2" style="left:539px;top:240px;width:97.5px;text-align:right">13.03.2017</div><div class="a c cb2" style="left:640px;top:240px;width:66px;text-align:center">Итог</div><div class="a c cb2" style="left:68.3px;top:260px">Магазин 1</div><div class="a c" style="left:107px;top:260px;width:97.5px;text-align:right">15256,66</div><div class="a c" style="left:177px;top:260px;width:97.5px;text-align:right">17458,96</div><div class="a c" style="left:249px;top:260px;width:97.5px;text-align:right">14569,85</div><div class="a c" style="left:322px;top:260px;width:97.5px;text-align:right">13589,25</div><div class="a c" style="left:397px;top:260px;width:97.5px;text-align:right">14785,65</div><div class="a c" style="left:466px;top:260px;width:97.5px;text-align:right">16589,63</div><div class="a c" style="left:539px;top:260px;width:97.5px;text-align:right">16546,25</div><div class="a c" style="left:606px;top:260px;width:97.5px;text-align:right">108796,25</div><div class="a c cb2" style="left:68.3px;top:280px">Магазин 2</div><div class="a c" style="left:107px;top:280px;width:97.5px;text-align:right">14851,25</div><div class="a c" style="left:177px;top:280px;width:97.5px;text-align:right">16582,65</div><div class="a c" style="left:249px;top:280px;width:97.5px;text-align:right">17589,78</div><div class="a c" style="left:322px;top:280px;width:97.5px;text-align:right">15478,96</div><div class="a c" style="left:397px;top:280px;width:97.5px;text-align:right">14246,85</div><div class="a c" style="left:466px;top:280px;width:97.5px;text-align:right">18111,54</div><div class="a c" style="left:539px;top:280px;width:97.5px;text-align:right">17489,63</div><div class="a c cb2" style="left:68.3px;top:300px">Магазин 3</div><div class="a c" style="left:107px;top:300px;width:97.5px;text-align:right">25879,69</div><div class="a c" style="left:177px;top:300px;width:97.5px;text-align:right">23647,87</div><div class="a c" style="left:249px;top:300px;width:97.5px;text-align:right">24789,32</div><div class="a c" style="left:322px;top:300px;width:97.5px;text-align:right">22478,96</div><div class="a c" style="left:397px;top:300px;width:97.5px;text-align:right">24782,34</div><div class="a c" style="left:466px;top:300px;width:97.5px;text-align:right">26891,43</div><div class="a c" style="left:539px;top:300px;width:97.5px;text-align:right">25597,47</div><div class="a c cb2" style="left:68.3px;top:320px">Магазин 4</div><div class="a c" style="left:107px;top:320px;width:97.5px;text-align:right">10552,69</div><div class="a c" style="left:177px;top:320px;width:97.5px;text-align:right">11478,45</div><div class="a c" style="left:249px;top:320px;width:97.5px;text-align:right">11548,96</div><div class="a c" style="left:322px;top:320px;width:97.5px;text-align:right">12211,65</div><div class="a c" style="left:397px;top:320px;width:97.5px;text-align:right">11456,98</div><div class="a c" style="left:466px;top:320px;width:97.5px;text-align:right">11356,96</div><div class="a c" style="left:539px;top:320px;width:97.5px;text-align:right">12569,87</div><div class="a c cb2" style="left:68.3px;top:340px">Магазин 5</div><div class="a c" style="left:107px;top:340px;width:97.5px;text-align:right">32478,96</div><div class="a c" style="left:177px;top:340px;width:97.5px;text-align:right">33478,96</div><div class="a c" style="left:249px;top:340px;width:97.5px;text-align:right">35698,89</div><div class="a c" style="left:322px;top:340px;width:97.5px;text-align:right">33478,96</div><div class="a c" style="left:397px;top:340px;width:97.5px;text-align:right">36529,89</div><div class="a c" style="left:466px;top:340px;width:97.5px;text-align:right">35713,63</div><div class="a c" style="left:539px;top:340px;width:97.5px;text-align:right">34178,56</div>
<div class="a" style="left:39px;top:170px;width:1px;height:496px;background:#6b7686"></div><div class="a" style="left:839px;top:170px;width:1px;height:496px;background:#6b7686"></div>
<div class="a" style="left:823px;top:199px;width:16px;height:428px;background:linear-gradient(90deg,#dadde2,#e6e9ed 50%,#dcdfe4)"></div>
<div class="a" style="left:823px;top:199px;width:16px;height:8px;background:#fff;border:1px solid #8e96a1;border-top:none"></div>
<div class="a" style="left:827px;top:202px;width:8px;height:1px;background:#7a828d"></div>
<svg style="left:826px;top:213px" width="10" height="6"><path d="M0 5.5 L5 0 L10 5.5 Z" fill="#474b52"/></svg>
<div class="a" style="left:823px;top:224px;width:15px;height:367px;border:1px solid #8d959f;border-radius:2px;background:linear-gradient(90deg,#f6f7f9 0%,#eceef2 50%,#dfe2e7 100%)"></div>
<div class="a" style="left:827px;top:402px;width:7px;height:8px;background:repeating-linear-gradient(180deg,#737b86 0,#737b86 1px,transparent 1px,transparent 2px)"></div>
<svg style="left:826px;top:616px" width="10" height="6"><path d="M0 0 L10 0 L5 5.5 Z" fill="#474b52"/></svg>

<div class="a" style="left:40px;top:627px;width:783px;height:16px;background:#e1e4e9"></div>
<div class="a" style="left:40px;top:642px;width:799px;height:1px;background:#8f97a2"></div>
<div class="a" style="left:40px;top:627px;width:63px;height:15px;background:#dde1e7;border:1px solid #a3abb5;border-left:none;border-bottom:none"></div>
<svg style="left:46px;top:630px" width="52" height="9" viewBox="0 0 52 9">
 <path d="M0.5 0 V8.5" stroke="#4a4f57" stroke-width="1.3"/><path d="M6 0 L1.8 4.2 L6 8.5 Z" fill="#4a4f57"/>
 <path d="M20 0 L15.8 4.2 L20 8.5 Z" fill="#4a4f57"/>
 <path d="M30 0 L34.2 4.2 L30 8.5 Z" fill="#4a4f57"/>
 <path d="M44 0 L48.2 4.2 L44 8.5 Z" fill="#4a4f57"/><path d="M49.5 0 V8.5" stroke="#4a4f57" stroke-width="1.3"/>
</svg>
<div class="a" style="left:103px;top:627px;width:160px;height:15px;background:#fff"></div>
<svg style="left:102px;top:627px" width="210" height="15" viewBox="0 0 210 15">
 <path d="M50.3 15.5 L64.1 0.5 H116.3 L103.5 15.5 Z" fill="#e3e6eb"/>
 <path d="M103.5 15.5 L116.3 0.5 H169.5 L155.8 15.5 Z" fill="#e3e6eb"/>
 <path d="M155.8 15.5 L169.5 0.5 H202.5 L189.4 15.5 Z" fill="#e3e6eb"/>
 <path d="M189.4 15.5 L202.5 0.5 H210 V15.5 Z" fill="#e3e6eb"/>
 <path d="M50.3 15.5 L64.1 0.5 H116.3 M103.5 15.5 L116.3 0.5 H169.5 M155.8 15.5 L169.5 0.5 H202.5 M189.4 15.5 L202.5 0.5 H210" fill="none" stroke="#9ea6b0"/>
 <path d="M52 15.5 L65 1.5 M105 15.5 L117.3 1.5 M157.3 15.5 L170.5 1.5 M191 15.5 L203.5 1.5" fill="none" stroke="#f7f8fa" stroke-width=".8"/>
 <path d="M50.5 15.5 L54.5 11 L54.5 15.5 Z M103.7 15.5 L107.7 11 L107.7 15.5 Z M156 15.5 L160 11 L160 15.5 Z" fill="#f2f3f5"/>
</svg>

<div class="a" style="left:312px;top:627px;width:198px;height:15px;background:#e3e6eb;border-top:1px solid #9ea6b0"></div>
<div class="a nw" style="left:112px;top:629px;font:bold 12px 'Liberation Sans',sans-serif;color:#2a2a3a">Лист1</div>
<div class="a ttab nw" style="left:166px">Лист2</div>
<div class="a ttab nw" style="left:219px">Лист3</div>
<svg style="left:272px;top:628px" width="17" height="14" viewBox="0 0 17 14">
 <defs><linearGradient id="nsg" x1="0" y1="0" x2="1" y2="1"><stop offset="0" stop-color="#ffffff"/><stop offset="1" stop-color="#b9cde9"/></linearGradient></defs>
 <path d="M4.5 3.5 H14.5 V11 C14.5 12 14 12.5 13 12.5 H11 C10 12.5 9.5 11.5 8 11.5 C6.5 11.5 6 12.5 5 12.5 C4.5 12.5 4.5 12 4.5 11 Z" fill="url(#nsg)" stroke="#3a5a9c"/>
 <g stroke="#e39b1c" stroke-width="1.1"><path d="M4 0.5 V7.5 M0.5 4 H7.5 M1.5 1.5 L6.5 6.5 M6.5 1.5 L1.5 6.5"/></g>
 <circle cx="4" cy="4" r="1.4" fill="#fff6c8"/>
</svg>

<div class="a" style="left:510px;top:627px;width:313px;height:15px;background:linear-gradient(180deg,#e0e3e8,#e8ebef 50%,#dde0e5);border-top:1px solid #a3abb5"></div>
<div class="a" style="left:510px;top:628px;width:8px;height:14px;background:#fff;border:1px solid #8e96a1;border-top:none;border-bottom:none"></div>
<div class="a" style="left:513px;top:631px;width:1px;height:8px;background:#7a828d"></div>
<svg style="left:523px;top:630px" width="6" height="10"><path d="M5.5 0 L0 5 L5.5 10 Z" fill="#474b52"/></svg>
<div class="a" style="left:535px;top:628px;width:236px;height:14px;border:1px solid #8d959f;border-radius:2px;background:linear-gradient(180deg,#f6f7f9 0%,#eceef2 50%,#dfe2e7 100%)"></div>
<div class="a" style="left:650px;top:631px;width:8px;height:7px;background:repeating-linear-gradient(90deg,#737b86 0,#737b86 1px,transparent 1px,transparent 2px)"></div>
<svg style="left:804px;top:630px" width="6" height="10"><path d="M0 0 L5.5 5 L0 10 Z" fill="#474b52"/></svg>
<div class="a" style="left:815px;top:628px;width:8px;height:14px;background:#fff;border:1px solid #8e96a1;border-top:none;border-bottom:none"></div>
<div class="a" style="left:818px;top:631px;width:1px;height:8px;background:#7a828d"></div>
<div class="a" style="left:823px;top:627px;width:16px;height:15px;background:#dde0e5;border-top:1px solid #c4c9d0"></div>

<div class="a sb" style="left:40px;top:643px;width:799px;height:22px"></div>
<div class="a" style="left:40px;top:665px;width:799px;height:1px;background:#8e96a0"></div>
<div class="a nw" style="left:47.5px;top:647px;font-size:12px;color:#35354d">Готово</div>
<div class="a" style="left:102px;top:645px;width:1px;height:19px;background:#b4bac3;box-shadow:1px 0 0 #f6f7f9"></div>
<svg style="left:112px;top:647px" width="15" height="13" viewBox="0 0 15 13">
 <rect x="0.5" y="2.5" width="14" height="10" fill="#fff" stroke="#2d4f9a"/>
 <rect x="1" y="3" width="13" height="2" fill="#5d86d0"/>
 <path d="M2 7 H5 M6 7 H9 M10 7 H13 M2 9.5 H5 M6 9.5 H9 M10 9.5 H13" stroke="#8da6d6" stroke-width="1.2"/>
 <circle cx="3.5" cy="3" r="3" fill="#e43a23"/><circle cx="2.8" cy="2.2" r="1" fill="#f7a690"/>
</svg>
<div class="a" style="left:137px;top:645px;width:1px;height:19px;background:#b4bac3;box-shadow:1px 0 0 #f6f7f9"></div>
<div class="a" style="left:582px;top:645px;width:1px;height:19px;background:#b4bac3;box-shadow:1px 0 0 #f6f7f9"></div>
<div class="a" style="left:587px;top:645px;width:19px;height:19px;border:1px solid #e2ac3f;border-radius:2px;background:linear-gradient(180deg,#fdebb0,#f9d570)"></div>
<svg style="left:590px;top:649px" width="13" height="10" viewBox="0 0 13 10"><rect x="0" y="0" width="13" height="10" fill="#4f555e"/><path d="M1 1 H4 V3 H1 Z M5 1 H8 V3 H5 Z M9 1 H12 V3 H9 Z M1 4 H4 V6 H1 Z M5 4 H8 V6 H5 Z M9 4 H12 V6 H9 Z M1 7 H4 V9 H1 Z M5 7 H8 V9 H5 Z M9 7 H12 V9 H9 Z" fill="#fff"/></svg>
<svg style="left:608px;top:648px" width="15" height="13" viewBox="0 0 15 13"><rect x="0.5" y="0.5" width="14" height="12" fill="#9aa0a8" stroke="#5d636c"/><rect x="3.5" y="2.5" width="8" height="8" fill="#f4f5f7" stroke="#6b7079"/><path d="M5 5 H10 M5 7 H10" stroke="#8b9098" stroke-width=".8"/></svg>
<svg style="left:627px;top:648px" width="15" height="13" viewBox="0 0 15 13"><rect x="0.5" y="0.5" width="14" height="12" fill="#a3a9b1" stroke="#5d636c"/><rect x="2" y="1.5" width="4" height="6" fill="#fff"/><rect x="7.5" y="1.5" width="3.5" height="6" fill="#fff"/><rect x="2" y="9" width="11" height="2.5" fill="#c9cdd3"/></svg>
<div class="a nw" style="left:653px;top:648px;font-size:11px;color:#35354d">100%</div>
<svg style="left:687px;top:645px" width="135" height="18" viewBox="0 0 135 18">
 <defs><linearGradient id="zc" x1="0" y1="0" x2="0" y2="1"><stop offset="0" stop-color="#ffffff"/><stop offset="1" stop-color="#e1e4e9"/></linearGradient></defs>
 <path d="M17 8.5 H117" stroke="#9ba1a9" stroke-width="1"/><path d="M17 9.5 H117" stroke="#f8f9fa" stroke-width="1"/>
 <circle cx="9" cy="9" r="7.5" fill="url(#zc)" stroke="#737b86"/>
 <path d="M5.5 9 H12.5" stroke="#3e434a" stroke-width="2"/>
 <circle cx="125" cy="9" r="7.5" fill="url(#zc)" stroke="#737b86"/>
 <path d="M121.5 9 H128.5 M125 5.5 V12.5" stroke="#3e434a" stroke-width="2"/>
 <path d="M63.5 2.5 H71.5 V11 L67.5 14.5 L63.5 11 Z" fill="url(#zc)" stroke="#737b86"/>
</svg>
<svg style="left:828px;top:653px" width="11" height="11" viewBox="0 0 11 11"><g fill="#9aa1aa"><rect x="8" y="0" width="2" height="2"/><rect x="4" y="4" width="2" height="2"/><rect x="8" y="4" width="2" height="2"/><rect x="0" y="8" width="2" height="2"/><rect x="4" y="8" width="2" height="2"/><rect x="8" y="8" width="2" height="2"/></g></svg>


<div class="a" style="left:638px;top:257px;width:70px;height:23px;border:2px solid #000"></div>
<div class="a" style="left:704px;top:277px;width:5px;height:5px;background:#000;border:1px solid #fff"></div>
<div class="a" style="left:640px;top:259px;width:66px;height:19px;background:#fff"></div>
<div class="a c" style="left:600px;top:260px;width:104px;text-align:right;font-size:12.5px;line-height:19px">108796,25</div>
<div class="a" style="left:705px;top:259px;width:2px;height:20px;background:#000"></div>
<div class="a rb" style="left:278px;top:165px;width:188px;height:35px;border-radius:12px"></div>
<div class="a rb" style="left:636.5px;top:255px;width:78.5px;height:26px;border-radius:13px;background:linear-gradient(180deg,rgba(0,0,0,.38) 0%,rgba(0,0,0,.2) 35%,rgba(0,0,0,.05) 75%,rgba(0,0,0,0) 100%)"></div>

</body></html>
